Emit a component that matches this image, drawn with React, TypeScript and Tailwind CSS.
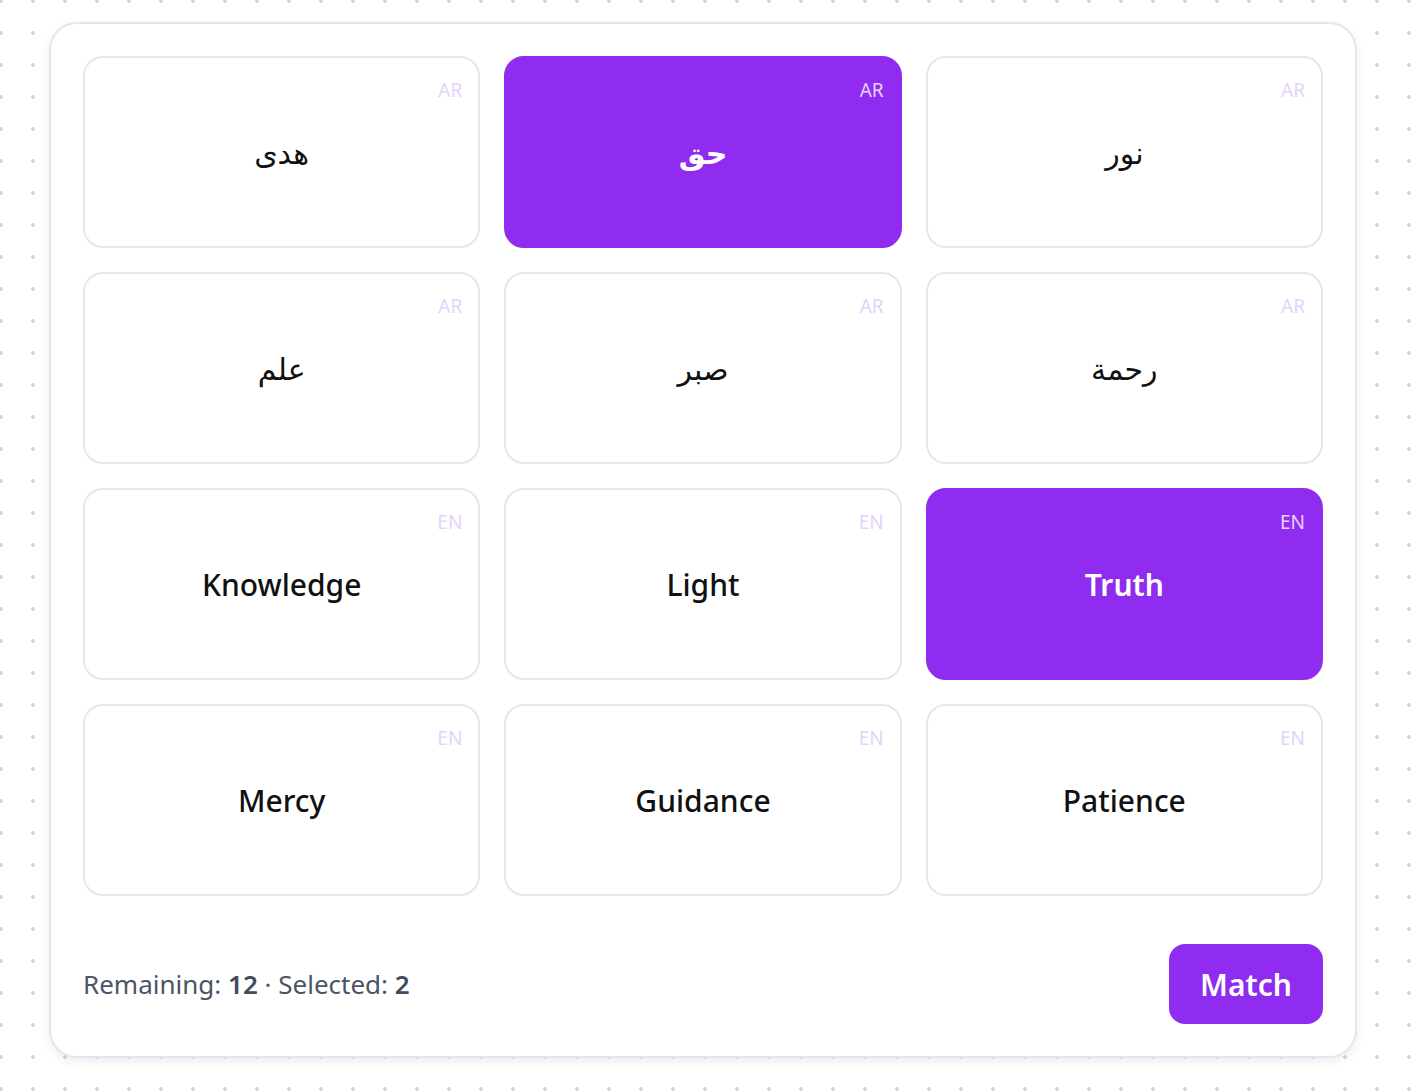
import React from "react";

type Card = { text: string; lang: "AR" | "EN"; selected?: boolean };

const cards: Card[] = [
  { text: "هدى", lang: "AR" },
  { text: "حق", lang: "AR", selected: true },
  { text: "نور", lang: "AR" },
  { text: "علم", lang: "AR" },
  { text: "صبر", lang: "AR" },
  { text: "رحمة", lang: "AR" },
  { text: "Knowledge", lang: "EN" },
  { text: "Light", lang: "EN" },
  { text: "Truth", lang: "EN", selected: true },
  { text: "Mercy", lang: "EN" },
  { text: "Guidance", lang: "EN" },
  { text: "Patience", lang: "EN" },
];

export default function App() {
  return (
    <div
      className="min-h-[1092px] w-[1416px] bg-white pl-[49px] pt-[22px]"
      style={{
        fontFamily: '"Noto Sans", "DejaVu Sans", sans-serif',
        backgroundImage: "radial-gradient(circle, #d6d6dc 1.6px, transparent 1.8px)",
        backgroundSize: "32px 32px",
        backgroundPosition: "-15px -15px",
      }}
    >
      <div className="w-[1308px] rounded-[28px] border-2 border-[#e3e6f0] bg-white p-8 shadow-[0_4px_10px_rgba(30,41,80,0.08)]">
        <div className="grid grid-cols-3 gap-6">
          {cards.map((c, i) => (
            <div
              key={i}
              className={
                c.selected
                  ? "relative flex h-48 items-center justify-center rounded-[20px] border-2 border-[#902cf0] bg-[#902cf0]"
                  : "relative flex h-48 items-center justify-center rounded-[20px] border-2 border-[#e6e6f2] bg-white"
              }
            >
              <span
                className={
                  c.selected
                    ? "absolute right-[16px] top-[23px] text-[19px] leading-none text-[#e6d3fd]"
                    : "absolute right-[16px] top-[23px] text-[19px] leading-none text-[#e3d2fb]"
                }
              >
                {c.lang}
              </span>
              <span
                dir={c.lang === "AR" ? "rtl" : "ltr"}
                className={
                  c.selected
                    ? "text-[30px] font-semibold text-white"
                    : "text-[30px] font-medium text-[#111111]"
                }
              >
                {c.text}
              </span>
            </div>
          ))}
        </div>
        <div className="mt-12 flex items-center justify-between">
          <div className="text-[26px] text-[#4b5567]">
            Remaining: <span className="font-semibold text-[#424c5e]">12</span> · Selected:{" "}
            <span className="font-semibold text-[#424c5e]">2</span>
          </div>
          <button className="h-20 w-[154px] rounded-2xl bg-[#902cf0] text-[30px] font-semibold text-white">
            Match
          </button>
        </div>
      </div>
    </div>
  );
}
